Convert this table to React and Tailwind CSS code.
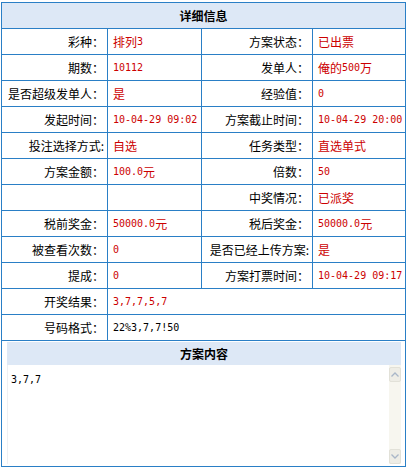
import React from 'react';

const cjk = "font-['Noto_Sans_CJK_SC','Noto_Sans',sans-serif]";

// split latin runs into a monospace span so numbers keep the narrow fixed pitch
const Txt = ({ text }) =>
  text.split(/([\x20-\x7e]+)/).filter(Boolean).map((part, i) =>
    /^[\x20-\x7e]+$/.test(part) ? (
      <span key={i} className="font-['DejaVu_Sans_Mono','Liberation_Mono',monospace] text-[10px] whitespace-pre">
        {part}
      </span>
    ) : (
      <span key={i}>{part}</span>
    )
  );

const Label = ({ children }) => (
  <div className="bg-white flex items-center justify-end pr-[3px] text-[12px] text-black whitespace-nowrap overflow-hidden">
    {children}
  </div>
);

const Value = ({ text, black, span }) => (
  <div
    className={`bg-white flex items-center pl-[5px] text-[12px] whitespace-nowrap overflow-hidden ${
      black ? 'text-black' : 'text-[#cc0000]'
    } ${span ? 'col-span-3' : ''}`}
  >
    {text ? <Txt text={text} /> : null}
  </div>
);

const Chevron = ({ down }) => (
  <svg width="8" height="5" viewBox="0 0 8 5">
    <path
      d={down ? 'M0.5 0.5 L4 4 L7.5 0.5' : 'M0.5 4.5 L4 1 L7.5 4.5'}
      fill="none"
      stroke="#a9b6c8"
      strokeWidth="1.3"
    />
  </svg>
);

const App = () => {
  const rows = [
    ['彩种：', '排列3', '方案状态：', '已出票'],
    ['期数：', '10112', '发单人：', '俺的500万'],
    ['是否超级发单人：', '是', '经验值：', '0'],
    ['发起时间：', '10-04-29 09:02', '方案截止时间：', '10-04-29 20:00'],
    ['投注选择方式:', '自选', '任务类型：', '直选单式'],
    ['方案金额：', '100.0元', '倍数：', '50'],
    ['', '', '中奖情况：', '已派奖'],
    ['税前奖金：', '50000.0元', '税后奖金：', '50000.0元'],
    ['被查看次数：', '0', '是否已经上传方案:', '是'],
    ['提成：', '0', '方案打票时间：', '10-04-29 09:17'],
  ];

  return (
    <div className={`w-[410px] h-[471px] bg-white pt-[2px] pl-[1px] ${cjk}`}>
      <div className="w-[405px] grid grid-cols-[105px_93px_110px_92px] grid-rows-[25px_repeat(12,25px)_125px] gap-px bg-[#2a7fc6] border border-[#2a7fc6]">
        <div className="col-span-4 bg-[#dde8f6] flex items-center justify-center text-[12px] font-bold text-black">
          详细信息
        </div>

        {rows.map((r, i) => (
          <React.Fragment key={i}>
            <Label>{r[0]}</Label>
            <Value text={r[1]} />
            <Label>{r[2]}</Label>
            <Value text={r[3]} />
          </React.Fragment>
        ))}

        <Label>开奖结果：</Label>
        <Value text="3,7,7,5,7" span />
        <Label>号码格式：</Label>
        <Value text="22%3,7,7!50" black span />

        <div className="col-span-4 bg-white pt-[1px] pl-[5px] pr-[4px] pb-[2px] flex flex-col">
          <div className="h-[23px] bg-[#dde8f6] flex items-center justify-center text-[12px] font-bold text-black">
            方案内容
          </div>
          <div className="flex-1 flex border-l border-[#eef0f3]">
            <div className="flex-1 pl-[3px] pt-[7px] text-[12px] text-black leading-none">
              <Txt text="3,7,7" />
            </div>
            <div className="w-[12px] bg-[#f7f6ef] flex flex-col justify-between pt-[2px] pb-0">
              <div className="h-[15px] bg-[#eeede6] border border-[#e2e1d8] rounded-[2px] flex items-center justify-center">
                <Chevron />
              </div>
              <div className="h-[15px] bg-[#eeede6] border border-[#e2e1d8] rounded-[2px] flex items-center justify-center">
                <Chevron down />
              </div>
            </div>
          </div>
        </div>
      </div>
    </div>
  );
};

export default App;
